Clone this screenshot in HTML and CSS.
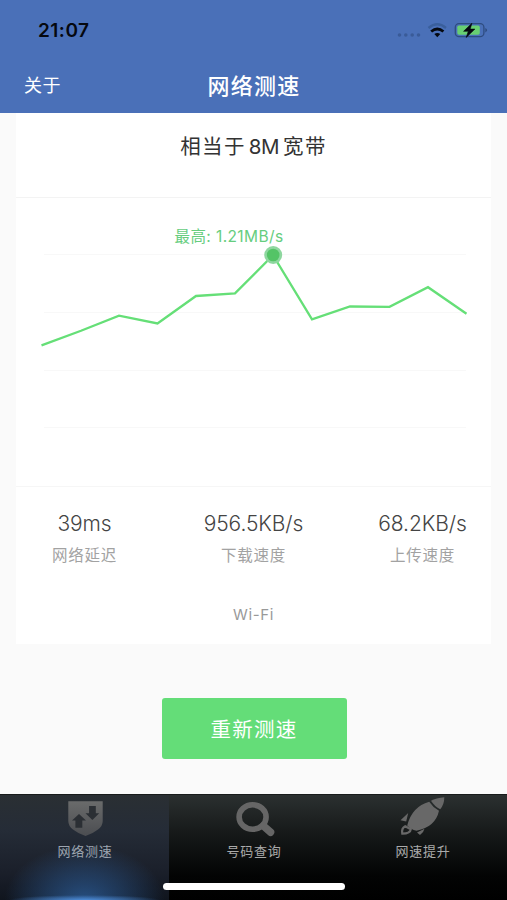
FILE: index.html
```html
<!DOCTYPE html>
<html lang="zh-CN">
<head>
  <meta charset="UTF-8" />
  <meta name="viewport" content="width=device-width, initial-scale=1.0"/>
  <title>网络测速</title>
  <link rel="stylesheet" href="styles.css">
</head>
<body>
  <header class="header">
    <div class="status">
      <span class="time">21:07</span>
      <svg class="status-icons" width="92" height="18" viewBox="0 0 92 18">
        <g fill="#3a5b98">
          <circle cx="2.5" cy="13" r="1.8"/>
          <circle cx="8.8" cy="13" r="1.8"/>
          <circle cx="15.2" cy="13" r="1.8"/>
          <circle cx="21.5" cy="13" r="1.8"/>
        </g>
        <g fill="none" stroke-width="2.3">
          <path d="M31.5 6Q40.3-1.4 49 6" stroke="#3a5f9c"/>
          <path d="M34.2 9.5Q40.3 4.4 46.4 9.5" stroke="#05080f" stroke-width="2.8"/>
        </g>
        <path d="M37.3 12.1Q40.3 9.7 43.3 12.1L40.3 15.3Z" fill="#05080f"/>
        <rect x="58.3" y="1.7" width="28.6" height="13" rx="3.7" fill="none" stroke="#2e4c80" stroke-width="1.3"/>
        <rect x="60.3" y="3.6" width="22.5" height="9.2" rx="1.7" fill="#68cf72"/>
        <path d="M88.3 6Q92 8.2 88.3 10.5Z" fill="#2e4c80"/>
        <path d="M74.9 1.2L66.6 9.3H71.3L69.2 15.5L77.9 7.1H73.2Z" fill="#05080f" stroke="#05080f" stroke-width=".6"/>
      </svg>
    </div>
    <nav class="nav">
      <a class="about">关于</a>
      <h1>网络测速</h1>
    </nav>
  </header>

  <main class="content">
    <section class="card">
      <h2 class="summary">相当于<span>8M</span>宽带</h2>
      <div class="chart">
        <svg width="475" height="288" viewBox="16 198 475 288">
          <path d="M44 254.5H466M44 312.5H466M44 370.5H466M44 427.5H466" stroke="#f8f8f8"/>
          <polyline points="41.5,345.3 81,330.8 119,315.6 157.5,323.5 196,296 235,293.4 273,255.2 312,319.3 350,306.5 389.5,306.8 428,287.2 466.5,313.8" fill="none" stroke="#65df77" stroke-width="2.3"/>
          <circle cx="273.2" cy="255" r="9" fill="#8ed79f"/>
          <circle cx="273.2" cy="255" r="6.3" fill="#54c466"/>
          <text class="peak" x="174.5" y="241.7">最高: 1.21MB/s</text>
        </svg>
      </div>
      <div class="stats">
        <div class="stat"><strong>39ms</strong><span>网络延迟</span></div>
        <div class="stat"><strong>956.5KB/s</strong><span>下载速度</span></div>
        <div class="stat"><strong>68.2KB/s</strong><span>上传速度</span></div>
      </div>
      <p class="network">Wi-Fi</p>
    </section>
    <button class="btn">重新测速</button>
  </main>

  <footer class="tabbar">
    <div class="tab active">
      <svg width="48" height="42" viewBox="0 0 48 42">
        <defs>
          <linearGradient id="shield" x1="0" y1="0" x2="0" y2="1">
            <stop offset="0" stop-color="#6a6b6b"/>
            <stop offset="1" stop-color="#4b4d51"/>
          </linearGradient>
        </defs>
        <path d="M7.3 6.3H41.7V26Q41.7 31 37 34.5Q32 38.5 24.5 41Q17 38.5 12 34.5Q7.3 31 7.3 26Z" fill="url(#shield)"/>
        <path d="M18 19L25 25.5H21.3V32.7H14.4V25.5H11ZM31.4 25L24.5 18.3H28.1V11H34.8V18.3H38.2Z" fill="#2b2f34"/>
      </svg>
      <span>网络测速</span>
    </div>
    <div class="tab">
      <svg width="48" height="42" viewBox="0 0 48 42">
        <ellipse cx="22.6" cy="22" rx="13.5" ry="12.2" fill="none" stroke="#666" stroke-width="5.6"/>
        <path d="M33.5 31L40.5 37.2" stroke="#666" stroke-width="7.6" stroke-linecap="round"/>
      </svg>
      <span>号码查询</span>
    </div>
    <div class="tab">
      <svg width="48" height="42" viewBox="0 0 48 42">
        <g fill="#686868">
          <path d="M8.2 30.5Q13 11.5 30.2 6.7Q34 12.5 40 15.8Q36.5 32 17.5 35.8Q11.5 34.5 8.2 30.5Z"/>
          <path d="M32 5.8Q37 3 45.3 2.2Q45.3 9 41.3 14.3Q35.5 11.5 32 5.8Z"/>
          <path d="M9.2 18L7.2 26.5L1.5 25.2ZM18 37.5L25.5 33.8Q24.5 38 21 40Z"/>
        </g>
        <path d="M6.2 31.2L11.8 34.2Q11.3 38.7 3.3 38.7Q2.2 33.2 6.2 31.2Z" fill="none" stroke="#686868" stroke-width="2.2"/>
      </svg>
      <span>网速提升</span>
    </div>
    <div class="home-indicator"></div>
  </footer>
</body>
</html>
```

FILE: styles.css
```css
* {
  box-sizing: border-box;
}
body {
  margin: 0;
  height: 900px;
  display: flex;
  flex-direction: column;
  overflow: hidden;
  background: #fafafa;
  color: #333;
  font-family: "Liberation Sans", "Noto Sans CJK SC", sans-serif;
}
h1, h2, p {
  margin: 0;
  font-weight: normal;
}
.header {
  height: 113px;
  flex: none;
  background: #4a70b8;
}
.status {
  height: 58px;
  padding: 22px 18px 0 38px;
  display: flex;
  justify-content: space-between;
}
.time {
  color: #05080f;
  font: 600 19px/18px Inter, sans-serif;
  letter-spacing: 0.5px;
}
.nav {
  height: 51px;
  padding: 0 24px;
  display: grid;
  grid-template-columns: 1fr auto 1fr;
  align-items: center;
  color: #fff;
}
.about {
  margin-top: 1px;
  font-size: 18px;
  letter-spacing: 0.6px;
}
.nav h1 {
  padding-left: 1px;
  font-size: 22px;
  font-weight: 500;
  letter-spacing: 1.2px;
  font-family: "Noto Sans CJK SC", sans-serif;
}
.content {
  height: 681px;
  display: flex;
  flex-direction: column;
  align-items: center;
}
.card {
  width: 475px;
  height: 531px;
  background: #fff;
}
.summary {
  height: 85px;
  padding-top: 18px;
  border-bottom: 1px solid #f3f3f3;
  text-align: center;
  font-size: 20.5px;
  line-height: 31px;
  letter-spacing: 1.3px;
}
.summary span {
  margin: 0 4px 0 3px;
  letter-spacing: -0.4px;
  font-family: Inter, sans-serif;
}
.chart {
  height: 288px;
}
.chart svg {
  display: block;
}
.peak {
  fill: #66cd7e;
  font-family: Inter, "Noto Sans CJK SC", sans-serif;
  font-size: 15.5px;
  letter-spacing: 0.4px;
}
.stats {
  height: 112px;
  padding: 23px 0 0;
  border-top: 1px solid #f6f6f6;
  display: grid;
  grid-template-columns: 137px 1fr 137px;
}
.stat {
  display: flex;
  flex-direction: column;
  align-items: center;
}
.stat strong {
  color: #444;
  font-size: 21px;
  font-weight: 300;
  line-height: 28px;
  letter-spacing: -0.1px;
  font-family: Inter, sans-serif;
}
.stat span {
  margin-top: 6px;
  color: #a2a2a2;
  font-size: 15.5px;
  line-height: 24px;
  letter-spacing: 0.8px;
}
.network {
  margin-top: 5px;
  text-align: center;
  color: #999;
  font: 15px/24px Inter, sans-serif;
  letter-spacing: 0.6px;
}
.btn {
  width: 185px;
  height: 61px;
  margin: 54px 0 0 1px;
  padding: 0 0 1px;
  border: none;
  border-radius: 3px;
  background: #64dd78;
  color: #fff;
  font: 20.5px "Noto Sans CJK SC", sans-serif;
  letter-spacing: 1.2px;
}
.tabbar {
  position: relative;
  height: 106px;
  display: grid;
  grid-template-columns: repeat(3, 1fr);
  border-top: 1px solid #181b1b;
  background: linear-gradient(#2b3030, #151818 40px, #030404 80px, #000);
}
.tab {
  display: flex;
  flex-direction: column;
  align-items: center;
  color: #aaa;
  font-size: 13px;
}
.tab svg {
  flex: none;
}
.tab span {
  margin: 6px 0 0 1px;
  line-height: 18px;
  letter-spacing: 0.7px;
}
.active {
  color: #9da5b0;
  background:
    radial-gradient(ellipse 75px 5px at 50% 100%, #4c8ad5, transparent),
    radial-gradient(ellipse 80px 55px at 50% 100%, rgba(44, 92, 151, 0.8), rgba(44, 92, 151, 0.42) 50%, transparent),
    linear-gradient(#2a2f33, #252c37 35px, #1b202b 75px, #10151e);
}
.home-indicator {
  position: absolute;
  left: 163px;
  top: 88px;
  width: 182px;
  height: 7px;
  border-radius: 4px;
  background: #fff;
}
```
